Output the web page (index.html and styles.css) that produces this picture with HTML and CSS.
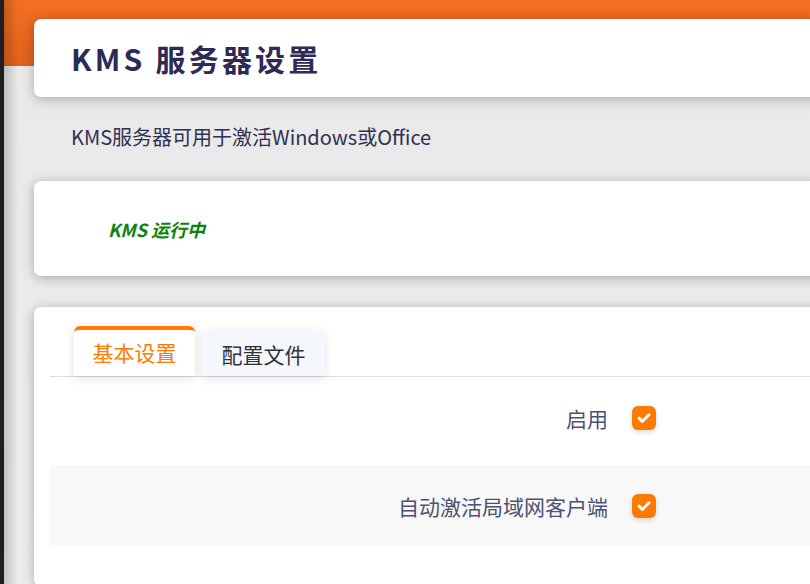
FILE: index.html
```html
<!DOCTYPE html>
<html lang="zh-CN">
<head>
<meta charset="utf-8">
<title>KMS 服务器设置</title>
<link rel="stylesheet" href="styles.css">
</head>
<body>
<div class="app">
  <div class="edge"></div>
  <main class="main">
    <div class="content">
      <section class="card header-card">
        <h1 class="title">KMS 服务器设置</h1>
      </section>
      <p class="desc">KMS服务器可用于激活Windows或Office</p>
      <section class="card status-card">
        <span class="status">KMS 运行中</span>
      </section>
      <section class="card settings-card">
        <div class="tabs">
          <div class="tab active">基本设置</div>
          <div class="tab">配置文件</div>
        </div>
        <div class="row first">
          <label class="label">启用</label>
          <span class="checkbox"><svg viewBox="0 0 24 24" width="24" height="24"><path d="M7 12.2l3.3 3.2L17 8.8" fill="none" stroke="#fff" stroke-width="3" stroke-linecap="round" stroke-linejoin="round"/></svg></span>
        </div>
        <div class="row alt">
          <label class="label">自动激活局域网客户端</label>
          <span class="checkbox"><svg viewBox="0 0 24 24" width="24" height="24"><path d="M7 12.2l3.3 3.2L17 8.8" fill="none" stroke="#fff" stroke-width="3" stroke-linecap="round" stroke-linejoin="round"/></svg></span>
        </div>
      </section>
    </div>
  </main>
</div>
</body>
</html>
```
FILE: styles.css
```css
html, body {
  margin: 0;
  padding: 0;
  height: 100%;
  overflow: hidden;
}
body {
  font-family: "Noto Sans CJK SC", "Noto Sans", sans-serif;
  background: #ebebeb;
}
.app {
  display: flex;
  height: 584px;
}
.edge {
  width: 4px;
  flex: none;
  background: #1f1f1f;
}
.main {
  flex: 1;
  overflow: hidden;
  background:
    linear-gradient(90deg, rgba(0,0,0,0.18), rgba(0,0,0,0) 14px),
    linear-gradient(180deg, #f36f22 0, #e0611c 66px, #e9e9e9 66px, #ececec 100%);
}
.content {
  padding: 19px 0 0 30px;
  margin-right: -60px;
}
.card {
  background: #fff;
  border-radius: 7px;
  box-shadow: 0 2px 12px rgba(0,0,0,0.28);
}
.header-card {
  height: 78px;
  display: flex;
  align-items: center;
  padding-left: 37px;
}
.title {
  margin: 0;
  font-size: 30px;
  font-weight: 700;
  letter-spacing: 3.2px;
  color: #2d2b55;
  line-height: 1;
}
.desc {
  margin: 0;
  height: 84px;
  box-sizing: border-box;
  padding-bottom: 5px;
  display: flex;
  align-items: center;
  padding-left: 37px;
  font-size: 20px;
  color: #303052;
}
.status-card {
  height: 95px;
  display: flex;
  align-items: center;
  padding-left: 74px;
}
.status {
  font-size: 18px;
  font-weight: 700;
  font-style: italic;
  color: #0a840a;
}
.settings-card {
  margin-top: 31px;
  padding: 19px 0 40px 16px;
}
.tabs {
  display: flex;
  align-items: flex-end;
  gap: 7px;
  padding-left: 24px;
  border-bottom: 1px solid #dcdcdc;
}
.tab {
  width: 123px;
  height: 45px;
  display: flex;
  align-items: center;
  justify-content: center;
  font-size: 21px;
  color: #333;
  background: #f4f7fb;
  border-radius: 6px 6px 0 0;
  box-shadow: 0 2px 10px rgba(0,0,0,0.12);
  box-sizing: border-box;
}
.tab.active {
  width: 121px;
  height: 50px;
  color: #ff7a00;
  background: #fff;
  border-top: 4px solid #ff7a00;
  padding-bottom: 2px;
}
.row {
  display: flex;
  align-items: center;
  height: 88px;
  box-sizing: border-box;
}
.row.first {
  padding-bottom: 6px;
}
.row.alt {
  height: 81px;
  background: #f8f8f8;
}
.label {
  width: 558px;
  text-align: right;
  font-size: 21px;
  color: #4b5273;
}
.checkbox {
  margin-left: 24px;
  width: 24px;
  height: 24px;
  border-radius: 6px;
  background: #ff7a00;
  box-shadow: 0 2px 5px rgba(0,0,0,0.15);
  display: flex;
}
```
